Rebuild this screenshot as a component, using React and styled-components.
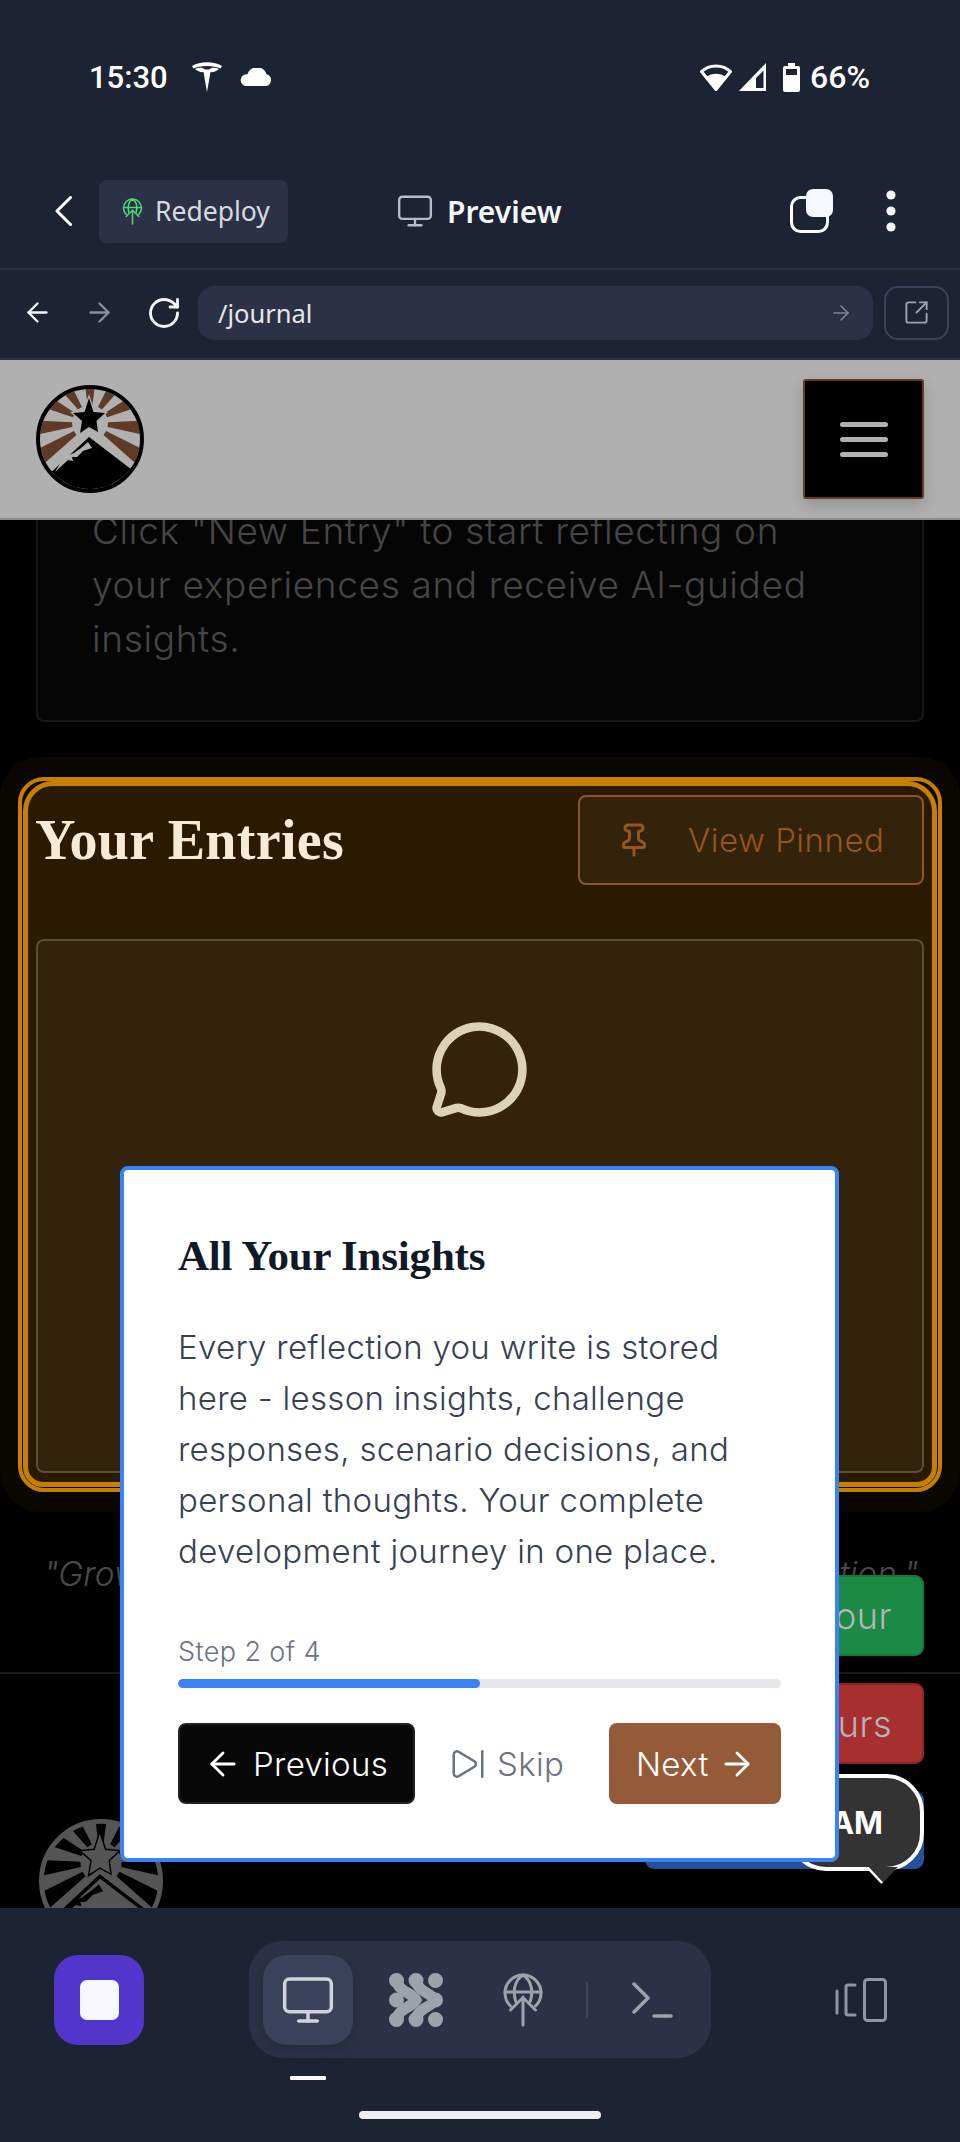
import React from "react";
import styled, { createGlobalStyle } from "styled-components";
import {
  ArrowLeft,
  ArrowRight,
  MessageCircle,
  Monitor,
  Pin,
  RotateCw,
  SkipForward,
  SquareArrowOutUpRight,
} from "lucide-react";

const GlobalStyle = createGlobalStyle`
  html, body {
    margin: 0;
    padding: 0;
    background: #000;
  }
  * {
    box-sizing: border-box;
  }
`;

const SANS = `Inter, "Noto Sans", sans-serif`;
const SERIF = `"Liberation Serif", serif`;
const CHROME = `"Noto Sans", Roboto, sans-serif`;

const Screen = styled.div`
  position: relative;
  width: 960px;
  height: 2142px;
  display: flex;
  flex-direction: column;
  overflow: hidden;
  background: #1c2333;
`;

/* phone status bar */
const StatusBar = styled.div`
  height: 154px;
  flex: none;
  display: flex;
  align-items: center;
  justify-content: space-between;
  padding: 0 90px 0 89px;
  color: #fff;
  font: 500 31px Roboto, sans-serif;
`;

const StatusGroup = styled.div`
  display: flex;
  align-items: center;
  gap: ${(p) => p.$gap || 0}px;
  margin-left: ${(p) => p.$left || 0}px;
`;

const BatteryText = styled.span`
  font-size: 32px;
`;

/* replit top bar */
const TopBar = styled.div`
  height: 116px;
  flex: none;
  display: flex;
  align-items: center;
  padding: 0 64px 0 55px;
  border-bottom: 2px solid #2c3246;
`;

const RedeployChip = styled.div`
  width: 189px;
  height: 63px;
  margin-left: 27px;
  display: flex;
  align-items: center;
  gap: 12px;
  padding-left: 23px;
  border-radius: 8px;
  background: #2c3246;
  color: #d7dae0;
  font: 400 26.5px ${CHROME};
`;

const PreviewTitle = styled.div`
  margin-left: 108px;
  display: flex;
  align-items: center;
  gap: 13px;
  color: #f5f6f8;
  font: 600 30px ${CHROME};
`;

const TopActions = styled.div`
  margin-left: auto;
  display: flex;
  align-items: center;
  gap: 53px;
`;

const UrlBar = styled.div`
  height: 90px;
  flex: none;
  display: flex;
  align-items: center;
  padding: 0 11px 3px 22px;
  border-bottom: 2px solid #2c3246;
`;

const UrlPill = styled.div`
  width: 675px;
  height: 54px;
  margin-left: 16px;
  display: flex;
  align-items: center;
  justify-content: space-between;
  padding: 0 20px;
  border-radius: 16px;
  background: #2c3246;
  color: #e5e7eb;
  font: 400 25.5px ${CHROME};
`;

const NavIcon = styled.span`
  display: flex;
  margin-left: ${(p) => p.$left || 0}px;
  color: ${(p) => p.$color || "#f5f6f8"};
`;

const OpenButton = styled.div`
  width: 65px;
  height: 54px;
  margin-left: 11px;
  display: flex;
  align-items: center;
  justify-content: center;
  border: 2px solid #3a415a;
  border-radius: 14px;
  color: #9ca3ae;
`;

/* the page inside the preview */
const WebView = styled.div`
  position: relative;
  flex: 1;
  min-height: 0;
  overflow: hidden;
  background: #000;
`;

const SiteNav = styled.header`
  position: relative;
  z-index: 2;
  height: 160px;
  display: flex;
  align-items: center;
  justify-content: space-between;
  padding: 0 36px;
  background: #b0b0b0;
  border-bottom: 2px solid #8c8c8c;
`;

const MenuButton = styled.div`
  width: 121px;
  height: 120px;
  display: flex;
  flex-direction: column;
  align-items: center;
  justify-content: center;
  gap: 10px;
  background: #000;
  border: 2px solid #6b3a1e;
  border-radius: 3px;
  box-shadow: 0 6px 14px rgba(0, 0, 0, 0.18);
`;

const MenuLine = styled.span`
  width: 48px;
  height: 5px;
  border-radius: 3px;
  background: #b0b0b0;
`;

const HintCard = styled.section`
  margin: -40px 36px 35px;
  height: 242px;
  padding: 22px 54px 0;
  background: #050505;
  border: 2px solid #15171c;
  border-radius: 8px;
`;

const HintText = styled.p`
  margin: 0;
  color: #464646;
  font: 300 37px/54px ${SANS};
  letter-spacing: 0.65px;
  white-space: nowrap;
`;

const EntriesSection = styled.section`
  height: 755px;
  padding: 20px 18px;
  background: #0a0702;
  border-radius: 40px;
`;

const OuterFrame = styled.div`
  height: 715px;
  padding: 0 1px 1px;
  background: #0a0702;
  border: 4px solid #c77f00;
  border-radius: 26px;
`;

const InnerFrame = styled.div`
  height: 100%;
  padding: 9px 8px 10px;
  background: #2a1a02;
  border: 5px solid #c77f00;
  border-radius: 30px 30px 20px 20px;
`;

const EntriesHeader = styled.div`
  display: flex;
  align-items: center;
  justify-content: space-between;
  height: 90px;
`;

const EntriesTitle = styled.h2`
  margin: 0 0 0 -1px;
  color: #f5ebd7;
  font: 700 56px ${SERIF};
  letter-spacing: 0.3px;
`;

const PinnedButton = styled.div`
  width: 346px;
  height: 90px;
  display: flex;
  align-items: center;
  gap: 36px;
  padding-left: 36px;
  background: #33230b;
  border: 2px solid #8f5524;
  border-radius: 8px;
  color: #95561f;
  font: 300 33px ${SANS};
  letter-spacing: 0.5px;
`;

const EmptyCard = styled.div`
  height: 534px;
  margin-top: 54px;
  display: flex;
  justify-content: center;
  padding: 77px 2px 0 0;
  background: #33230b;
  border: 2px solid #56503f;
  border-radius: 8px;
  color: #dcd2b9;
`;

const Quote = styled.p`
  margin: 40px 40px 0;
  padding-left: 2px;
  text-align: center;
  color: #4a4a4a;
  font: italic 300 33.5px/44px ${SANS};
  white-space: nowrap;
`;

const SiteFooter = styled.footer`
  margin-top: 76px;
  padding: 145px 39px 0;
  border-top: 2px solid #1a1a1a;
`;

const FloatingStack = styled.div`
  position: absolute;
  right: 36px;
  top: 1215px;
  display: flex;
  flex-direction: column;
  align-items: flex-end;
  gap: 27px;
`;

const FloatButton = styled.div`
  width: ${(p) => p.$width}px;
  height: ${(p) => p.$height}px;
  display: flex;
  align-items: center;
  justify-content: flex-end;
  padding-right: 30px;
  background: ${(p) => p.$bg};
  border: 2px solid ${(p) => p.$edge};
  border-radius: 9px;
  color: #b5b5b5;
  font: 300 36px ${SANS};
  letter-spacing: 0.5px;
`;

const ChatBubble = styled.div`
  position: absolute;
  right: 36px;
  top: 1414px;
  width: 136px;
  height: 97px;
  display: flex;
  align-items: center;
  justify-content: flex-end;
  padding-right: 37px;
  background: #333;
  border: 4px solid #fff;
  border-radius: 38px;
  color: #fff;
  font: 700 31px ${SANS};
`;

const ChatTail = styled.svg`
  position: absolute;
  right: 20px;
  bottom: -18px;
`;

/* tour dialog */
const TourDialog = styled.div`
  position: absolute;
  left: 120px;
  top: 1166px;
  z-index: 5;
  width: 719px;
  height: 696px;
  padding: 62px 54px 0;
  background: #fff;
  border: 4px solid #3b82f6;
  border-radius: 8px;
`;

const DialogTitle = styled.h3`
  margin: 0;
  color: #111827;
  font: 700 43px/48px ${SERIF};
  letter-spacing: -0.2px;
`;

const DialogText = styled.p`
  margin: 42px 0 0;
  color: #374151;
  font: 300 33px/51px ${SANS};
  letter-spacing: 0.3px;
  white-space: nowrap;
`;

const StepLabel = styled.div`
  margin-top: 58px;
  color: #6b7280;
  font: 300 27px/34px ${SANS};
  letter-spacing: 0.4px;
`;

const ProgressTrack = styled.div`
  height: 9px;
  margin-top: 10px;
  border-radius: 5px;
  background: #e5e7eb;
  overflow: hidden;
`;

const ProgressFill = styled.div`
  height: 100%;
  border-radius: 5px;
  background: #3b82f6;
`;

const DialogActions = styled.div`
  display: flex;
  align-items: center;
  margin-top: 35px;
`;

const DialogButton = styled.div`
  height: 81px;
  display: flex;
  align-items: center;
  gap: ${(p) => p.$gap}px;
  width: ${(p) => p.$width}px;
  margin-left: ${(p) => p.$left || 0}px;
  padding-left: ${(p) => p.$pad || 0}px;
  background: ${(p) => p.$bg || "transparent"};
  border: ${(p) => (p.$edge ? `2px solid ${p.$edge}` : "none")};
  border-radius: 8px;
  color: ${(p) => p.$color || "#fff"};
  font: 300 33px ${SANS};
  letter-spacing: 0.3px;
`;

/* bottom tool bar */
const BottomBar = styled.div`
  height: 234px;
  flex: none;
  display: flex;
  flex-direction: column;
  padding-top: 33px;
  background: #1c2333;
`;

const ToolRow = styled.div`
  height: 117px;
  display: flex;
  align-items: center;
  padding-left: 54px;
`;

const StopButton = styled.div`
  width: 90px;
  height: 90px;
  display: flex;
  align-items: center;
  justify-content: center;
  border-radius: 24px;
  background: #5236cc;
`;

const StopSquare = styled.span`
  width: 39px;
  height: 40px;
  border-radius: 7px;
  background: #f5f8ff;
`;

const ToolGroup = styled.div`
  width: 462px;
  height: 117px;
  margin-left: 105px;
  display: flex;
  align-items: center;
  padding-left: 14px;
  border-radius: 34px;
  background: #2c3246;
`;

const ToolTab = styled.div`
  width: ${(p) => p.$width || 90}px;
  height: 90px;
  margin-left: ${(p) => p.$left || 0}px;
  display: flex;
  align-items: center;
  justify-content: center;
  border-radius: 24px;
  color: ${(p) => (p.$active ? "#cfd3db" : "#9ca3ab")};
  background: ${(p) => (p.$active ? "#3a415a" : "transparent")};
  box-shadow: ${(p) => (p.$active ? "0 6px 14px rgba(20, 24, 38, 0.25)" : "none")};
`;

const ToolDivider = styled.span`
  width: 2px;
  height: 36px;
  margin-left: 43px;
  background: #3e4660;
`;

const TabMarker = styled.span`
  width: 36px;
  height: 4px;
  margin: 18px 0 0 290px;
  border-radius: 1px;
  background: #fff;
`;

const HomeBar = styled.span`
  align-self: center;
  width: 242px;
  height: 8px;
  margin-top: 31px;
  border-radius: 4px;
  background: #eceef1;
`;

const CopyIcon = () => (
  <svg width="43" height="44" viewBox="0 0 43 44">
    <rect x="1.5" y="8.5" width="36" height="34" rx="9" fill="none" stroke="#fff" strokeWidth="3" />
    <rect x="16" y="0" width="27" height="28" rx="7" fill="#f5f8ff" />
  </svg>
);

const KebabIcon = () => (
  <svg width="10" height="42" viewBox="0 0 10 42" fill="#f5f6f8">
    <circle cx="5" cy="5" r="4.6" />
    <circle cx="5" cy="21" r="4.6" />
    <circle cx="5" cy="37" r="4.6" />
  </svg>
);

const BackChevron = () => (
  <svg width="17" height="30" viewBox="0 0 17 30" fill="none" stroke="#fff" strokeWidth="3" strokeLinecap="round" strokeLinejoin="round">
    <path d="M15.5 1.5 2 15l13.5 13.5" />
  </svg>
);

const TeslaIcon = () => (
  <svg width="30" height="30" viewBox="0 0 30 30" fill="#fff">
    <path d="M0 4C8-1 22-1 30 4l-1.500 2.500C22 3 8 3 1.500 6.500z" />
    <path d="M3 7c4-2 8-1.500 10 .5h4c2-2 6-2.500 10-.5-2.500 2.500-6 3.500-8.500 3L15 30 11.500 10C9 10.500 5.500 9.500 3 7z" />
  </svg>
);

const CloudIcon = () => (
  <svg width="32" height="18" viewBox="0 0 32 18" fill="#fff">
    <path d="M6 18h20a6 6 0 0 0 1.500-11.800A10 10 0 0 0 8.500 6.300 6 6 0 0 0 6 18z" />
  </svg>
);

const WifiIcon = () => (
  <svg width="34" height="30" viewBox="0 0 34 30">
    <path d="M17 27.500 2.500 9.500C10 2 24 2 31.500 9.500z" fill="none" stroke="#fff" strokeWidth="3" strokeLinejoin="round" />
    <path d="M17 29 7 15c6-4.500 14-4.500 20 0z" fill="#fff" />
  </svg>
);

const SignalIcon = () => (
  <svg width="27" height="28" viewBox="0 0 27 28" fill="#fff" fillRule="evenodd">
    <path d="M0 28 27 0v28zM17 25h7.500V7.500L17 15z" />
  </svg>
);

const BatteryIcon = () => (
  <svg width="17" height="29" viewBox="0 0 17 29">
    <path d="M5 0h7v3h3a2 2 0 0 1 2 2v22a2 2 0 0 1-2 2H2a2 2 0 0 1-2-2V5a2 2 0 0 1 2-2h3z" fill="#fff" />
    <rect x="3" y="6" width="11" height="6" fill="#1c2333" />
  </svg>
);

const GlobeArrow = ({ width, height, color }) => (
  <svg width={width} height={height} viewBox="0 0 40 54" fill="none" stroke={color} strokeWidth="3" strokeLinecap="round">
    <path d="M7.500 33A18 18 0 1 1 32.500 33" />
    <path d="M2 19h36M13 29C9 18 12 7 20 2c8 5 11 16 7 27" />
    <path d="M20 52V24M7.500 37 20 24.500 32.500 37" />
  </svg>
);

const NodesIcon = () => (
  <svg width="54" height="54" viewBox="0 0 54 54" fill="none">
    <g stroke="#9ca3ab" strokeWidth="11" strokeLinecap="round">
      <path d="M7.500 7.500C10 19 22 19 27 27 22 35 10 35 7.500 46.500" />
      <path d="M27 7.500C29 19 41 19 46.500 27 41 35 29 35 27 46.500" />
    </g>
    <g fill="#9ca3ab">
      <circle cx="7.500" cy="7.500" r="7.500" />
      <circle cx="27" cy="7.500" r="7.500" />
      <circle cx="46.500" cy="7.500" r="7.500" />
      <circle cx="7.500" cy="27" r="7.500" />
      <circle cx="46.500" cy="27" r="7.500" />
      <circle cx="7.500" cy="46.500" r="7.500" />
      <circle cx="27" cy="46.500" r="7.500" />
      <circle cx="46.500" cy="46.500" r="7.500" />
    </g>
  </svg>
);

const TerminalIcon = () => (
  <svg width="41" height="36" viewBox="0 0 41 36" fill="none" stroke="#9ca3ab" strokeWidth="3.500" strokeLinecap="round" strokeLinejoin="round">
    <path d="M2 2 16 16 2 30M22 34h17" />
  </svg>
);

const DevicesIcon = () => (
  <svg width="52" height="44" viewBox="0 0 52 44" fill="none" stroke="#8f96a3" strokeWidth="3" strokeLinecap="round" strokeLinejoin="round">
    <path d="M2 13v22M20 7h-7a2 2 0 0 0-2 2v26a2 2 0 0 0 2 2h7" />
    <rect x="29.500" y="1.500" width="21" height="41" rx="3" />
  </svg>
);

const RAY_ANGLES = [0, 34, -34, 64, -64, 95, -95, 124, -124];

const rayPoints = (deg) => {
  const spread = 7.5;
  const at = (a, r) => {
    const t = ((a - 90) * Math.PI) / 180;
    return `${54 + r * Math.cos(t)},${38 + r * Math.sin(t)}`;
  };
  return [at(deg - spread, 18), at(deg + spread, 18), at(deg + spread, 75), at(deg - spread, 75)].join(" ");
};

const LogoMark = ({ id, size = 108, disk, ray, mark, halo }) => (
  <svg width={size} height={size} viewBox="0 0 108 108">
    <clipPath id={id}>
      <circle cx="54" cy="54" r="50" />
    </clipPath>
    <circle cx="54" cy="54" r="52" fill={disk} />
    <g clipPath={`url(#${id})`}>
      {RAY_ANGLES.map((deg) => (
        <polygon key={deg} points={rayPoints(deg)} fill={ray} />
      ))}
      <polygon points="53,50 100,86 108,108 0,108 8,92" fill={mark} stroke={halo} strokeWidth="3" />
      <polygon
        points="52,57 56,63 47,66 41,72 36,72 37,76 32,75 19,87 28,72 38,68 45,63"
        fill={halo}
      />
    </g>
    <polygon
      points="53,13 57.500,27 69,28 60.500,36 62,47 53,42 44,48 46,36 37,28 48.500,27"
      fill={mark}
      stroke={halo}
      strokeWidth="2.500"
      paintOrder="stroke"
    />
    <circle cx="54" cy="54" r="52" fill="none" stroke={mark} strokeWidth="4" />
  </svg>
);

const App = () => {
  const step = 2;
  const totalSteps = 4;

  return (
    <Screen>
      <GlobalStyle />

      <StatusBar>
        <StatusGroup>
          <span>15:30</span>
          <StatusGroup $gap={17} $left={24}>
            <TeslaIcon />
            <CloudIcon />
          </StatusGroup>
        </StatusGroup>
        <StatusGroup $gap={6}>
          <WifiIcon />
          <SignalIcon />
          <StatusGroup $gap={10} $left={11}>
            <BatteryIcon />
            <BatteryText>66%</BatteryText>
          </StatusGroup>
        </StatusGroup>
      </StatusBar>

      <TopBar>
        <BackChevron />
        <RedeployChip>
          <GlobeArrow width={21} height={27} color="#4fd675" />
          Redeploy
        </RedeployChip>
        <PreviewTitle>
          <Monitor size={38} strokeWidth={1.5} color="#b7bcc6" />
          Preview
        </PreviewTitle>
        <TopActions>
          <CopyIcon />
          <KebabIcon />
        </TopActions>
      </TopBar>

      <UrlBar>
        <NavIcon>
          <ArrowLeft size={31} strokeWidth={1.8} />
        </NavIcon>
        <NavIcon $left={31} $color="#8a8f9c">
          <ArrowRight size={31} strokeWidth={1.8} />
        </NavIcon>
        <NavIcon $left={31}>
          <RotateCw size={36} strokeWidth={1.9} />
        </NavIcon>
        <UrlPill>
          /journal
          <NavIcon $color="#7f8492">
            <ArrowRight size={24} strokeWidth={1.6} />
          </NavIcon>
        </UrlPill>
        <OpenButton>
          <SquareArrowOutUpRight size={27} strokeWidth={1.7} />
        </OpenButton>
      </UrlBar>

      <WebView>
        <SiteNav>
          <LogoMark id="nav-logo" disk="#b0b0b0" ray="#5e3a27" mark="#000" halo="#b0b0b0" />
          <MenuButton>
            <MenuLine />
            <MenuLine />
            <MenuLine />
          </MenuButton>
        </SiteNav>

        <HintCard>
          <HintText>
            Click "New Entry" to start reflecting on
            <br />
            your experiences and receive AI-guided
            <br />
            insights.
          </HintText>
        </HintCard>

        <EntriesSection>
          <OuterFrame>
            <InnerFrame>
              <EntriesHeader>
                <EntriesTitle>Your Entries</EntriesTitle>
                <PinnedButton>
                  <Pin size={36} strokeWidth={2} />
                  View Pinned
                </PinnedButton>
              </EntriesHeader>
              <EmptyCard>
                <MessageCircle size={103} strokeWidth={2} />
              </EmptyCard>
            </InnerFrame>
          </OuterFrame>
        </EntriesSection>

        <Quote>"Growth begins with honest and steady daily reflection."</Quote>

        <SiteFooter>
          <LogoMark id="footer-logo" size={124} disk="#555" ray="#000" mark="#555" halo="#000" />
        </SiteFooter>

        <FloatingStack>
          <FloatButton $width={260} $height={81} $bg="#1a8a44" $edge="#167a3b">
            Take Tour
          </FloatButton>
          <FloatButton $width={260} $height={81} $bg="#a82f30" $edge="#8f2426">
            Reset Tours
          </FloatButton>
          <FloatButton $width={279} $height={78} $bg="#25519b" $edge="#25519b" />
        </FloatingStack>

        <ChatBubble>
          I AM
          <ChatTail width="34" height="18" viewBox="0 0 34 18">
            <polygon points="0,0 32,0 16,17" fill="#333" />
            <path d="M1 0 16 16" stroke="#fff" strokeWidth="2.500" />
          </ChatTail>
        </ChatBubble>
      </WebView>

      <BottomBar>
        <ToolRow>
          <StopButton>
            <StopSquare />
          </StopButton>
          <ToolGroup>
            <ToolTab $active>
              <Monitor size={56} strokeWidth={1.5} />
            </ToolTab>
            <ToolTab $width={54} $left={36}>
              <NodesIcon />
            </ToolTab>
            <ToolTab $width={40} $left={60}>
              <GlobeArrow width={40} height={54} color="#9ca3ab" />
            </ToolTab>
            <ToolDivider />
            <ToolTab $width={41} $left={44}>
              <TerminalIcon />
            </ToolTab>
          </ToolGroup>
          <NavIcon $left={124}>
            <DevicesIcon />
          </NavIcon>
        </ToolRow>
        <TabMarker />
        <HomeBar />
      </BottomBar>

      <TourDialog>
        <DialogTitle>All Your Insights</DialogTitle>
        <DialogText>
          Every reflection you write is stored
          <br />
          here - lesson insights, challenge
          <br />
          responses, scenario decisions, and
          <br />
          personal thoughts. Your complete
          <br />
          development journey in one place.
        </DialogText>
        <StepLabel>
          Step {step} of {totalSteps}
        </StepLabel>
        <ProgressTrack>
          <ProgressFill style={{ width: `${(step / totalSteps) * 100}%` }} />
        </ProgressTrack>
        <DialogActions>
          <DialogButton $width={237} $pad={24} $gap={11} $bg="#080808" $edge="#222">
            <ArrowLeft size={38} strokeWidth={1.8} />
            Previous
          </DialogButton>
          <DialogButton $width={120} $left={34} $gap={10} $color="#6b7280">
            <SkipForward size={38} strokeWidth={1.6} />
            Skip
          </DialogButton>
          <DialogButton $width={172} $left={40} $pad={27} $gap={9} $bg="#955a38">
            Next
            <ArrowRight size={38} strokeWidth={1.8} />
          </DialogButton>
        </DialogActions>
      </TourDialog>
    </Screen>
  );
};

export default App;
